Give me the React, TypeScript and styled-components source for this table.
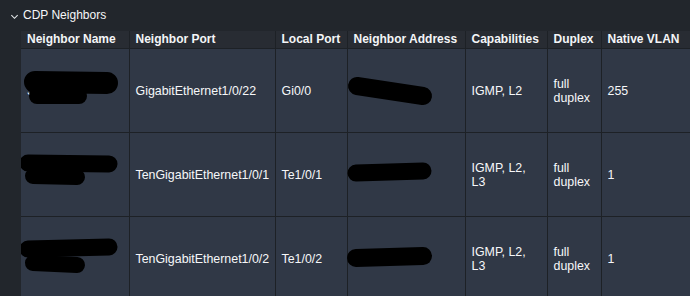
import React from "react";
import styled, { createGlobalStyle } from "styled-components";

const GlobalStyle = createGlobalStyle`
  html, body {
    margin: 0;
    padding: 0;
    background: #22262c;
    overflow: hidden;
  }
  body {
    font-family: "Liberation Sans", Arial, sans-serif;
    color: #f2f3f5;
  }
`;

const Panel = styled.div`
  width: 690px;
  height: 296px;
  overflow: hidden;
  background: #22262c;
`;

const SectionTitle = styled.div`
  display: flex;
  align-items: center;
  gap: 4px;
  height: 31px;
  padding-left: 10px;
  font-size: 12px;
  color: #f6f7f9;
  box-sizing: border-box;
  padding-bottom: 1px;
`;

const Chevron = styled.svg`
  width: 9px;
  height: 9px;
  margin-top: 2px;
`;

const TableWrap = styled.div`
  margin-left: 21px;
  overflow: hidden;
`;

const Table = styled.table`
  border-collapse: collapse;
  table-layout: fixed;
  width: 680px;
  font-size: 12.4px;
`;

const HeadCell = styled.th`
  background: #282c33;
  height: 17px;
  padding: 0 6px;
  text-align: left;
  font-size: 12px;
  font-weight: 700;
  color: #f4f5f7;
  white-space: nowrap;
  border-right: 1px solid #1d2126;
  border-bottom: 1px solid #1d2126;
  line-height: 17px;
`;

const Cell = styled.td`
  position: relative;
  background: #303846;
  height: 83px;
  padding: 0 6px;
  line-height: 14px;
  vertical-align: middle;
  color: #f6f7f9;
  border-right: 1px solid #1d2126;
  border-bottom: 1px solid #1d2126;
`;

const Redaction = styled.svg`
  position: absolute;
  left: 0;
  top: 0;
  width: 120px;
  height: 83px;
  overflow: visible;
  pointer-events: none;
`;

type Stroke = [number, number, number, number, number];

const Blot: React.FC<{ strokes: Stroke[] }> = ({ strokes }) => (
  <Redaction viewBox="0 0 120 83">
    {strokes.map(([x1, y1, x2, y2, w], i) => (
      <line
        key={i}
        x1={x1}
        y1={y1}
        x2={x2}
        y2={y2}
        stroke="#000"
        strokeWidth={w}
        strokeLinecap="round"
      />
    ))}
  </Redaction>
);

const COLS = [108, 146, 72, 118, 82, 54, 100];

interface Row {
  nameBlot: Stroke[];
  addrBlot: Stroke[];
  port: string;
  local: string;
  caps: string;
  duplex: string;
  vlan: string;
  nameHint?: string;
}

const ROWS: Row[] = [
  {
    nameHint: "S",
    nameBlot: [
      [14, 33, 86, 34, 22],
      [16, 47, 58, 47, 16],
    ],
    addrBlot: [[9, 37, 75, 47, 18]],
    port: "GigabitEthernet1/0/22",
    local: "Gi0/0",
    caps: "IGMP, L2",
    duplex: "full duplex",
    vlan: "255",
  },
  {
    nameBlot: [
      [7, 30, 88, 31, 17],
      [12, 43, 56, 44, 16],
    ],
    addrBlot: [[8, 40, 75, 38, 17]],
    port: "TenGigabitEthernet1/0/1",
    local: "Te1/0/1",
    caps: "IGMP, L2, L3",
    duplex: "full duplex",
    vlan: "1",
  },
  {
    nameBlot: [
      [7, 32, 88, 30, 17],
      [12, 46, 56, 48, 16],
    ],
    addrBlot: [[8, 41, 75, 39, 18]],
    port: "TenGigabitEthernet1/0/2",
    local: "Te1/0/2",
    caps: "IGMP, L2, L3",
    duplex: "full duplex",
    vlan: "1",
  },
];

const HEADERS = [
  "Neighbor Name",
  "Neighbor Port",
  "Local Port",
  "Neighbor Address",
  "Capabilities",
  "Duplex",
  "Native VLAN",
];

export default function App() {
  return (
    <Panel>
      <GlobalStyle />
      <SectionTitle>
        <Chevron viewBox="0 0 10 10">
          <path d="M1.5 3.5 L5 7 L8.5 3.5" fill="none" stroke="#e6e8eb" strokeWidth="1.2" />
        </Chevron>
        CDP Neighbors
      </SectionTitle>
      <TableWrap>
        <Table>
          <colgroup>
            {COLS.map((w, i) => (
              <col key={i} style={{ width: w }} />
            ))}
          </colgroup>
          <thead>
            <tr>
              {HEADERS.map((h) => (
                <HeadCell key={h}>{h}</HeadCell>
              ))}
            </tr>
          </thead>
          <tbody>
            {ROWS.map((r, i) => (
              <tr key={i}>
                <Cell>
                  {r.nameHint}
                  <Blot strokes={r.nameBlot} />
                </Cell>
                <Cell>{r.port}</Cell>
                <Cell>{r.local}</Cell>
                <Cell>
                  <Blot strokes={r.addrBlot} />
                </Cell>
                <Cell>{r.caps}</Cell>
                <Cell>{r.duplex}</Cell>
                <Cell>{r.vlan}</Cell>
              </tr>
            ))}
          </tbody>
        </Table>
      </TableWrap>
    </Panel>
  );
}
